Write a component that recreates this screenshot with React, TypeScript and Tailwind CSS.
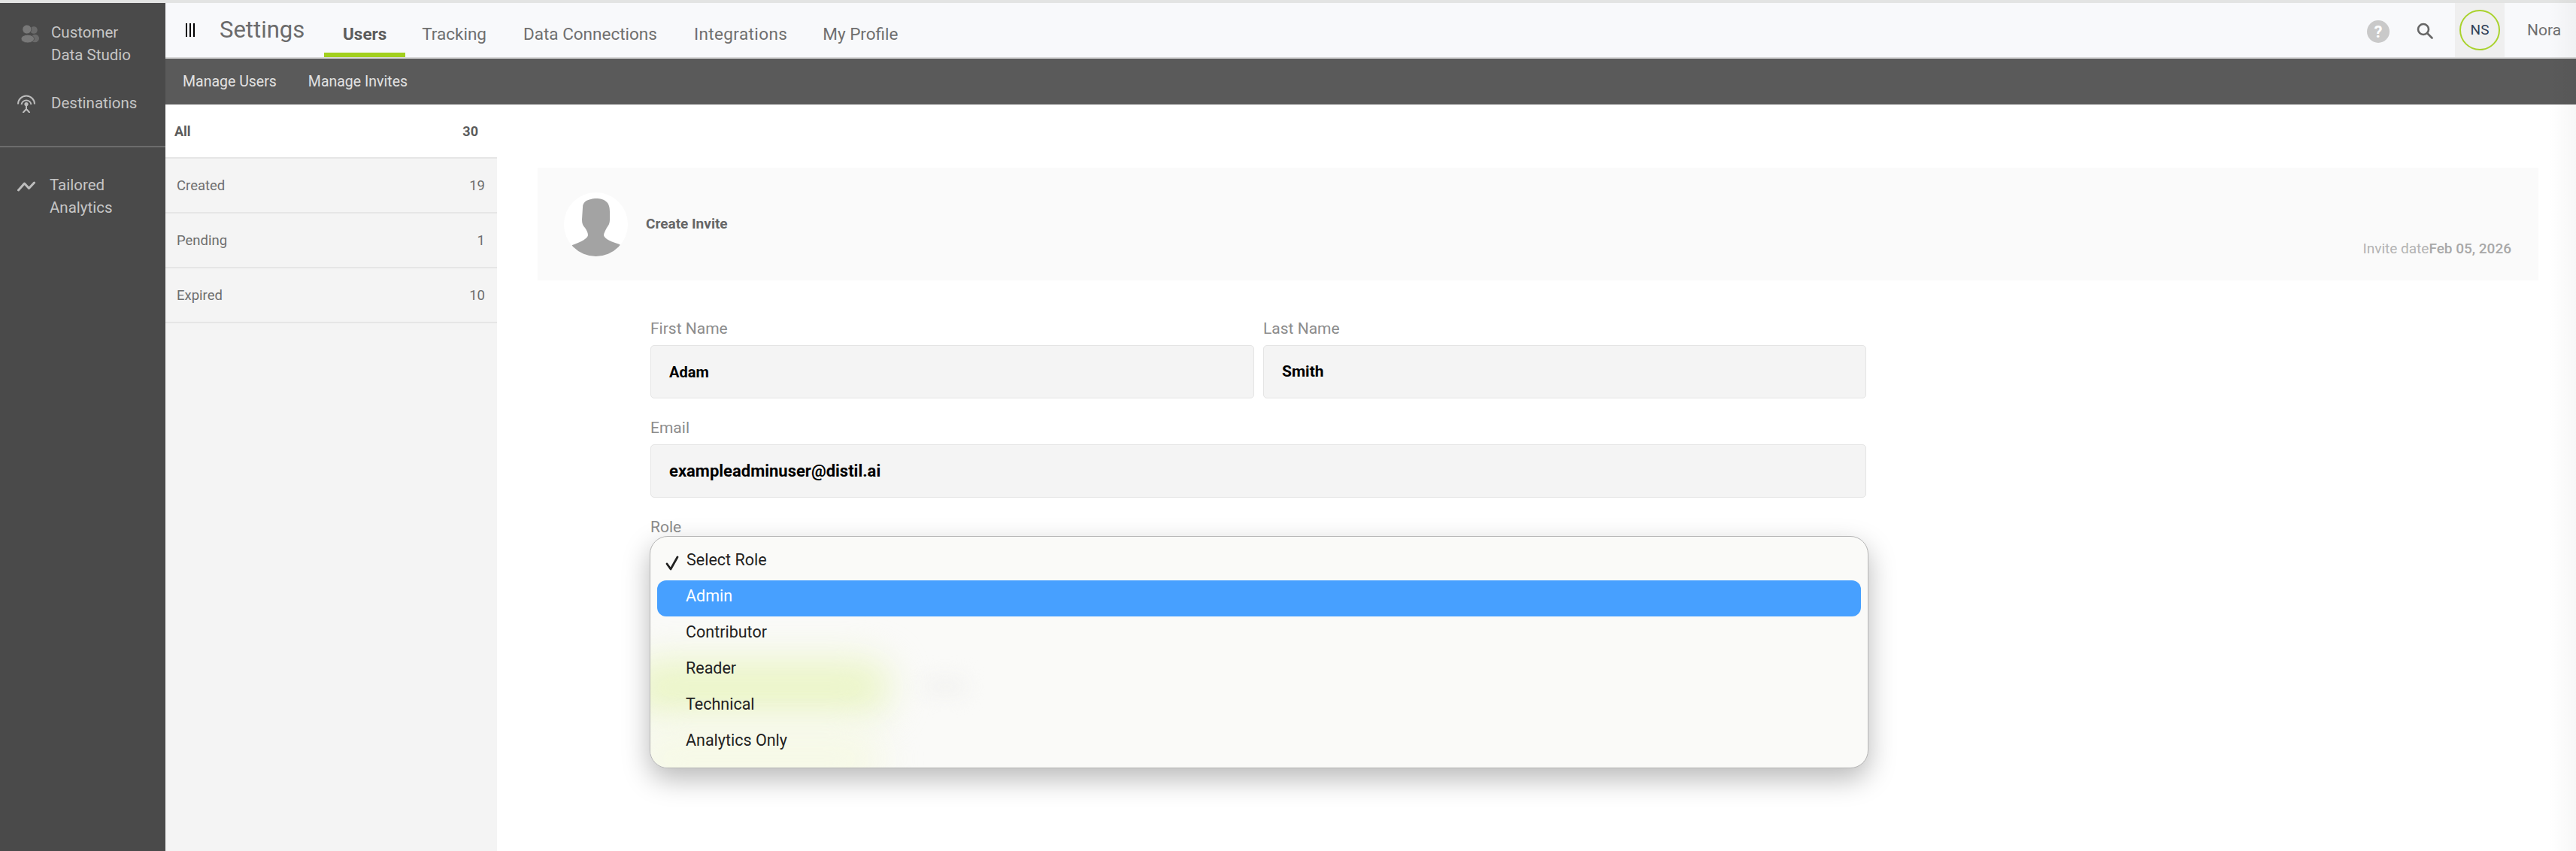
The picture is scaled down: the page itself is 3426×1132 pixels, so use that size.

import React from "react";

const font = { fontFamily: '"Roboto", "Liberation Sans", sans-serif' };

function People() {
  return (
    <svg viewBox="0 0 24 24" className="w-[24px] h-[24px]">
      <circle cx="17" cy="7" r="4.8" fill="#6a6a6a" />
      <ellipse cx="18.5" cy="18" rx="5.5" ry="5.2" fill="#6a6a6a" />
      <circle cx="7.8" cy="6" r="6" fill="#787878" stroke="#4a4a4a" strokeWidth="0.8" />
      <ellipse cx="8.8" cy="18.6" rx="8.8" ry="5.4" fill="#787878" stroke="#4a4a4a" strokeWidth="0.8" />
    </svg>
  );
}

function Antenna() {
  return (
    <svg viewBox="0 0 24 24" className="w-[24px] h-[24px]" fill="none" stroke="#bdbdbd" strokeWidth="2">
      <path d="M1 12.5a11 11 0 0 1 22 0" />
      <path d="M5.5 13a6.6 6.6 0 0 1 13 0" />
      <circle cx="12" cy="12.5" r="2.6" fill="#bdbdbd" stroke="none" />
      <path d="M12 14v5M12 19l-4 4.5M12 19l4 4.5" strokeLinecap="round" />
    </svg>
  );
}

function Trend() {
  return (
    <svg viewBox="0 0 24 15" className="w-[24px] h-[15px]" fill="none" stroke="#bdbdbd" strokeWidth="3" strokeLinecap="round" strokeLinejoin="round">
      <path d="M1.5 12L9.5 3l6 6.5 7-7.5" />
    </svg>
  );
}

function SideItem({ icon, lines, className, textClass }: { icon: React.ReactNode; lines: string[]; className: string; textClass: string }) {
  return (
    <div className={"flex " + className}>
      {icon}
      <div className={"text-[20.5px] leading-[30px] text-[#c6c6c6] " + textClass}>
        {lines.map((l) => (
          <div key={l}>{l}</div>
        ))}
      </div>
    </div>
  );
}

function ListRow({ label, count }: { label: string; count: number }) {
  return (
    <div className="h-[73px] flex items-center justify-between pl-[15px] pr-[16px] pt-[2px] border-b-2 border-[#e6e6e6] text-[18.5px] text-[#6e6e6e]">
      <span>{label}</span>
      <span>{count}</span>
    </div>
  );
}

function Field({ label, value, className, valueClass }: { label: string; value: string; className: string; valueClass: string }) {
  return (
    <div className={className}>
      <div className="h-[28px] mb-[8px] text-[21px] leading-[28px] text-[#8c8c8c]">{label}</div>
      <div className={"h-[71px] flex items-center px-[24px] bg-[#f4f4f4] border border-[#e4e4e4] rounded-[5px] font-bold text-black " + valueClass}>
        {value}
      </div>
    </div>
  );
}

export default function App() {
  const options = ["Admin", "Contributor", "Reader", "Technical", "Analytics Only"];
  return (
    <div style={font} className="relative w-[3426px] h-[1132px] overflow-hidden bg-white flex flex-col">
      <div className="h-[4px] bg-[#e3e4e3]" />
      <div className="flex flex-1 min-h-0">
        <aside className="w-[220px] bg-[#4a4a4a] flex flex-col">
          <SideItem className="pt-[24px] pl-[28px]" textClass="pl-[16px]" icon={<div className="pt-[5px]"><People /></div>} lines={["Customer", "Data Studio"]} />
          <SideItem className="pt-[34px] pl-[23px] h-[106px]" textClass="pl-[21px]" icon={<div className="pt-[4px]"><Antenna /></div>} lines={["Destinations"]} />
          <div className="border-t-2 border-[#6c6c6c]" />
          <SideItem className="pt-[35px] pl-[23px]" textClass="pl-[19px]" icon={<div className="pt-[10px]"><Trend /></div>} lines={["Tailored", "Analytics"]} />
        </aside>

        <div className="flex-1 flex flex-col min-w-0">
          <header className="h-[74px] bg-[#f8f9fb] border-b-2 border-[#d9d9d9] flex items-start">
            <div className="w-[27px] ml-[27px] mt-[27px] flex gap-[3px]">
              <span className="w-[2px] h-[18px] bg-black" />
              <span className="w-[2px] h-[18px] bg-black" />
              <span className="w-[2px] h-[18px] bg-black" />
            </div>
            <div className="ml-[18px] mt-[16px] text-[31px] leading-[40px] text-[#6b6b6b]">Settings</div>
            <nav className="ml-[26px] flex h-[72px] text-[22.5px] text-[#6f6f6f]">
              <div className="w-[108px] h-[72px] flex justify-center pt-[27px] border-b-[6px] border-[#a2d01e] font-bold leading-[28px] text-[#5c5c5c]">Users</div>
              <div className="ml-[22px] pt-[27px] leading-[28px]">Tracking</div>
              <div className="ml-[49px] pt-[27px] leading-[28px]">Data Connections</div>
              <div className="ml-[49px] pt-[27px] leading-[28px] tracking-[0.4px]">Integrations</div>
              <div className="ml-[47px] pt-[27px] leading-[28px]">My Profile</div>
            </nav>
            <div className="ml-auto flex items-start">
              <div className="mt-[23px] w-[30px] h-[30px] rounded-full bg-[#c9c9c9] flex items-center justify-center text-white font-bold text-[22px]">?</div>
              <svg viewBox="0 0 22 22" className="ml-[36px] mt-[26px] w-[22px] h-[22px]" fill="none" stroke="#666" strokeWidth="2.6" strokeLinecap="round">
                <circle cx="9" cy="9" r="7" />
                <path d="M14 14l6.5 6.5" />
              </svg>
              <div className="ml-[29px] w-[66px] h-[72px] bg-[#efefef] flex items-center justify-center">
                <div className="w-[54px] h-[54px] rounded-full border-2 border-[#a9d22c] flex items-center justify-center text-[19px] text-[#2f3e55]">NS</div>
              </div>
              <div className="ml-[30px] w-[44px] mr-[21px] mt-[22px] text-[21px] leading-[28px] text-[#6f6f6f]">Nora</div>
            </div>
          </header>

          <div className="h-[61px] bg-[#5a5a5a] flex items-center gap-[42px] pl-[23px] text-[19.5px] text-[#e2e2e2]">
            <span>Manage Users</span>
            <span>Manage Invites</span>
          </div>

          <div className="flex-1 flex min-h-0">
            <div className="w-[441px] bg-[#f4f4f4] flex flex-col">
              <div className="h-[72px] bg-white flex items-center justify-between pl-[12px] pr-[25px] border-b-2 border-[#e6e6e6] text-[18px] font-bold text-[#5c5c5c]">
                <span>All</span>
                <span>30</span>
              </div>
              <ListRow label="Created" count={19} />
              <ListRow label="Pending" count={1} />
              <ListRow label="Expired" count={10} />
            </div>

            <main className="flex-1 min-w-0 pt-[84px] pl-[54px] pr-[50px]">
              <div className="relative h-[150px] bg-[#fafafa] flex items-center pl-[35px]">
                <div className="w-[85px] h-[85px] rounded-full bg-white overflow-hidden">
                  <svg viewBox="0 0 85 85" className="w-[85px] h-[85px]" fill="#a3a3a3">
                    <path d="M25 20C25 13 30 10 36 9C42 7 52 8 56 12C60 15 61 20 61 26L61 36C61 42 59 44 57 47C55 51 53 54 53 57C54 62 64 66 74 69L85 85L0 85L11 70C22 66 31 62 32 57C32 53 30 50 28 47C25 44 24 41 24 36Z" />
                  </svg>
                </div>
                <div className="ml-[24px] text-[19px] font-bold text-[#666]">Create Invite</div>
                <div className="absolute right-[36px] top-[98px] text-[19px] leading-[20px] text-[#b3b3b3]">
                  Invite date<span className="font-medium text-[#a8a8a8]">Feb 05, 2026</span>
                </div>
              </div>

              <div className="ml-[150px] w-[1617px] pt-[50px] flex flex-col gap-[25px]">
                <div className="flex gap-[12px]">
                  <Field className="w-[803px]" label="First Name" value="Adam" valueClass="text-[20px]" />
                  <Field className="flex-1" label="Last Name" value="Smith" valueClass="text-[21px]" />
                </div>
                <Field className="w-full" label="Email" value="exampleadminuser@distil.ai" valueClass="text-[22px]" />
                <div className="relative">
                  <div className="h-[28px] text-[21px] leading-[28px] text-[#8c8c8c]">Role</div>
                  <div className="absolute left-[-1px] top-[26px] w-[1621px] h-[309px] rounded-[24px] border border-[#b5b5b5] bg-[#fafaf8] shadow-[0_14px_36px_rgba(0,0,0,0.28)] overflow-hidden pt-[10px] text-[21.5px] text-[#222]">
                    <div className="absolute left-[-30px] top-[162px] w-[350px] h-[76px] rounded-[40px] bg-[#ebf5c8] blur-xl" />
                    <div className="absolute left-[-20px] top-[255px] w-[330px] h-[80px] rounded-[40px] bg-[#f6f9e6] blur-xl" />
                    <div className="absolute left-[362px] top-[186px] w-[60px] h-[26px] rounded-full bg-[#f3f3f1] blur-md" />
                    <div className="relative h-[48px] pl-[48px] pb-[6px] flex items-center">
                      <svg viewBox="0 0 20 20" className="absolute left-[19px] top-[15px] w-[20px] h-[20px]" fill="none" stroke="#222" strokeWidth="2.8" strokeLinecap="round" strokeLinejoin="round">
                        <path d="M3 11l5 7L17 2" />
                      </svg>
                      Select Role
                    </div>
                    {options.map((o, i) => (
                      <div key={o} className={"relative h-[48px] mx-[9px] pl-[38px] pb-[6px] flex items-center rounded-[12px] " + (i === 0 ? "bg-[#47a0ff] text-white" : "")}>
                        {o}
                      </div>
                    ))}
                  </div>
                </div>
              </div>
            </main>
          </div>
        </div>
      </div>
      <div className="absolute right-0 top-0 w-[36px] h-full bg-gradient-to-r from-transparent to-[#00000008]" />
    </div>
  );
}
